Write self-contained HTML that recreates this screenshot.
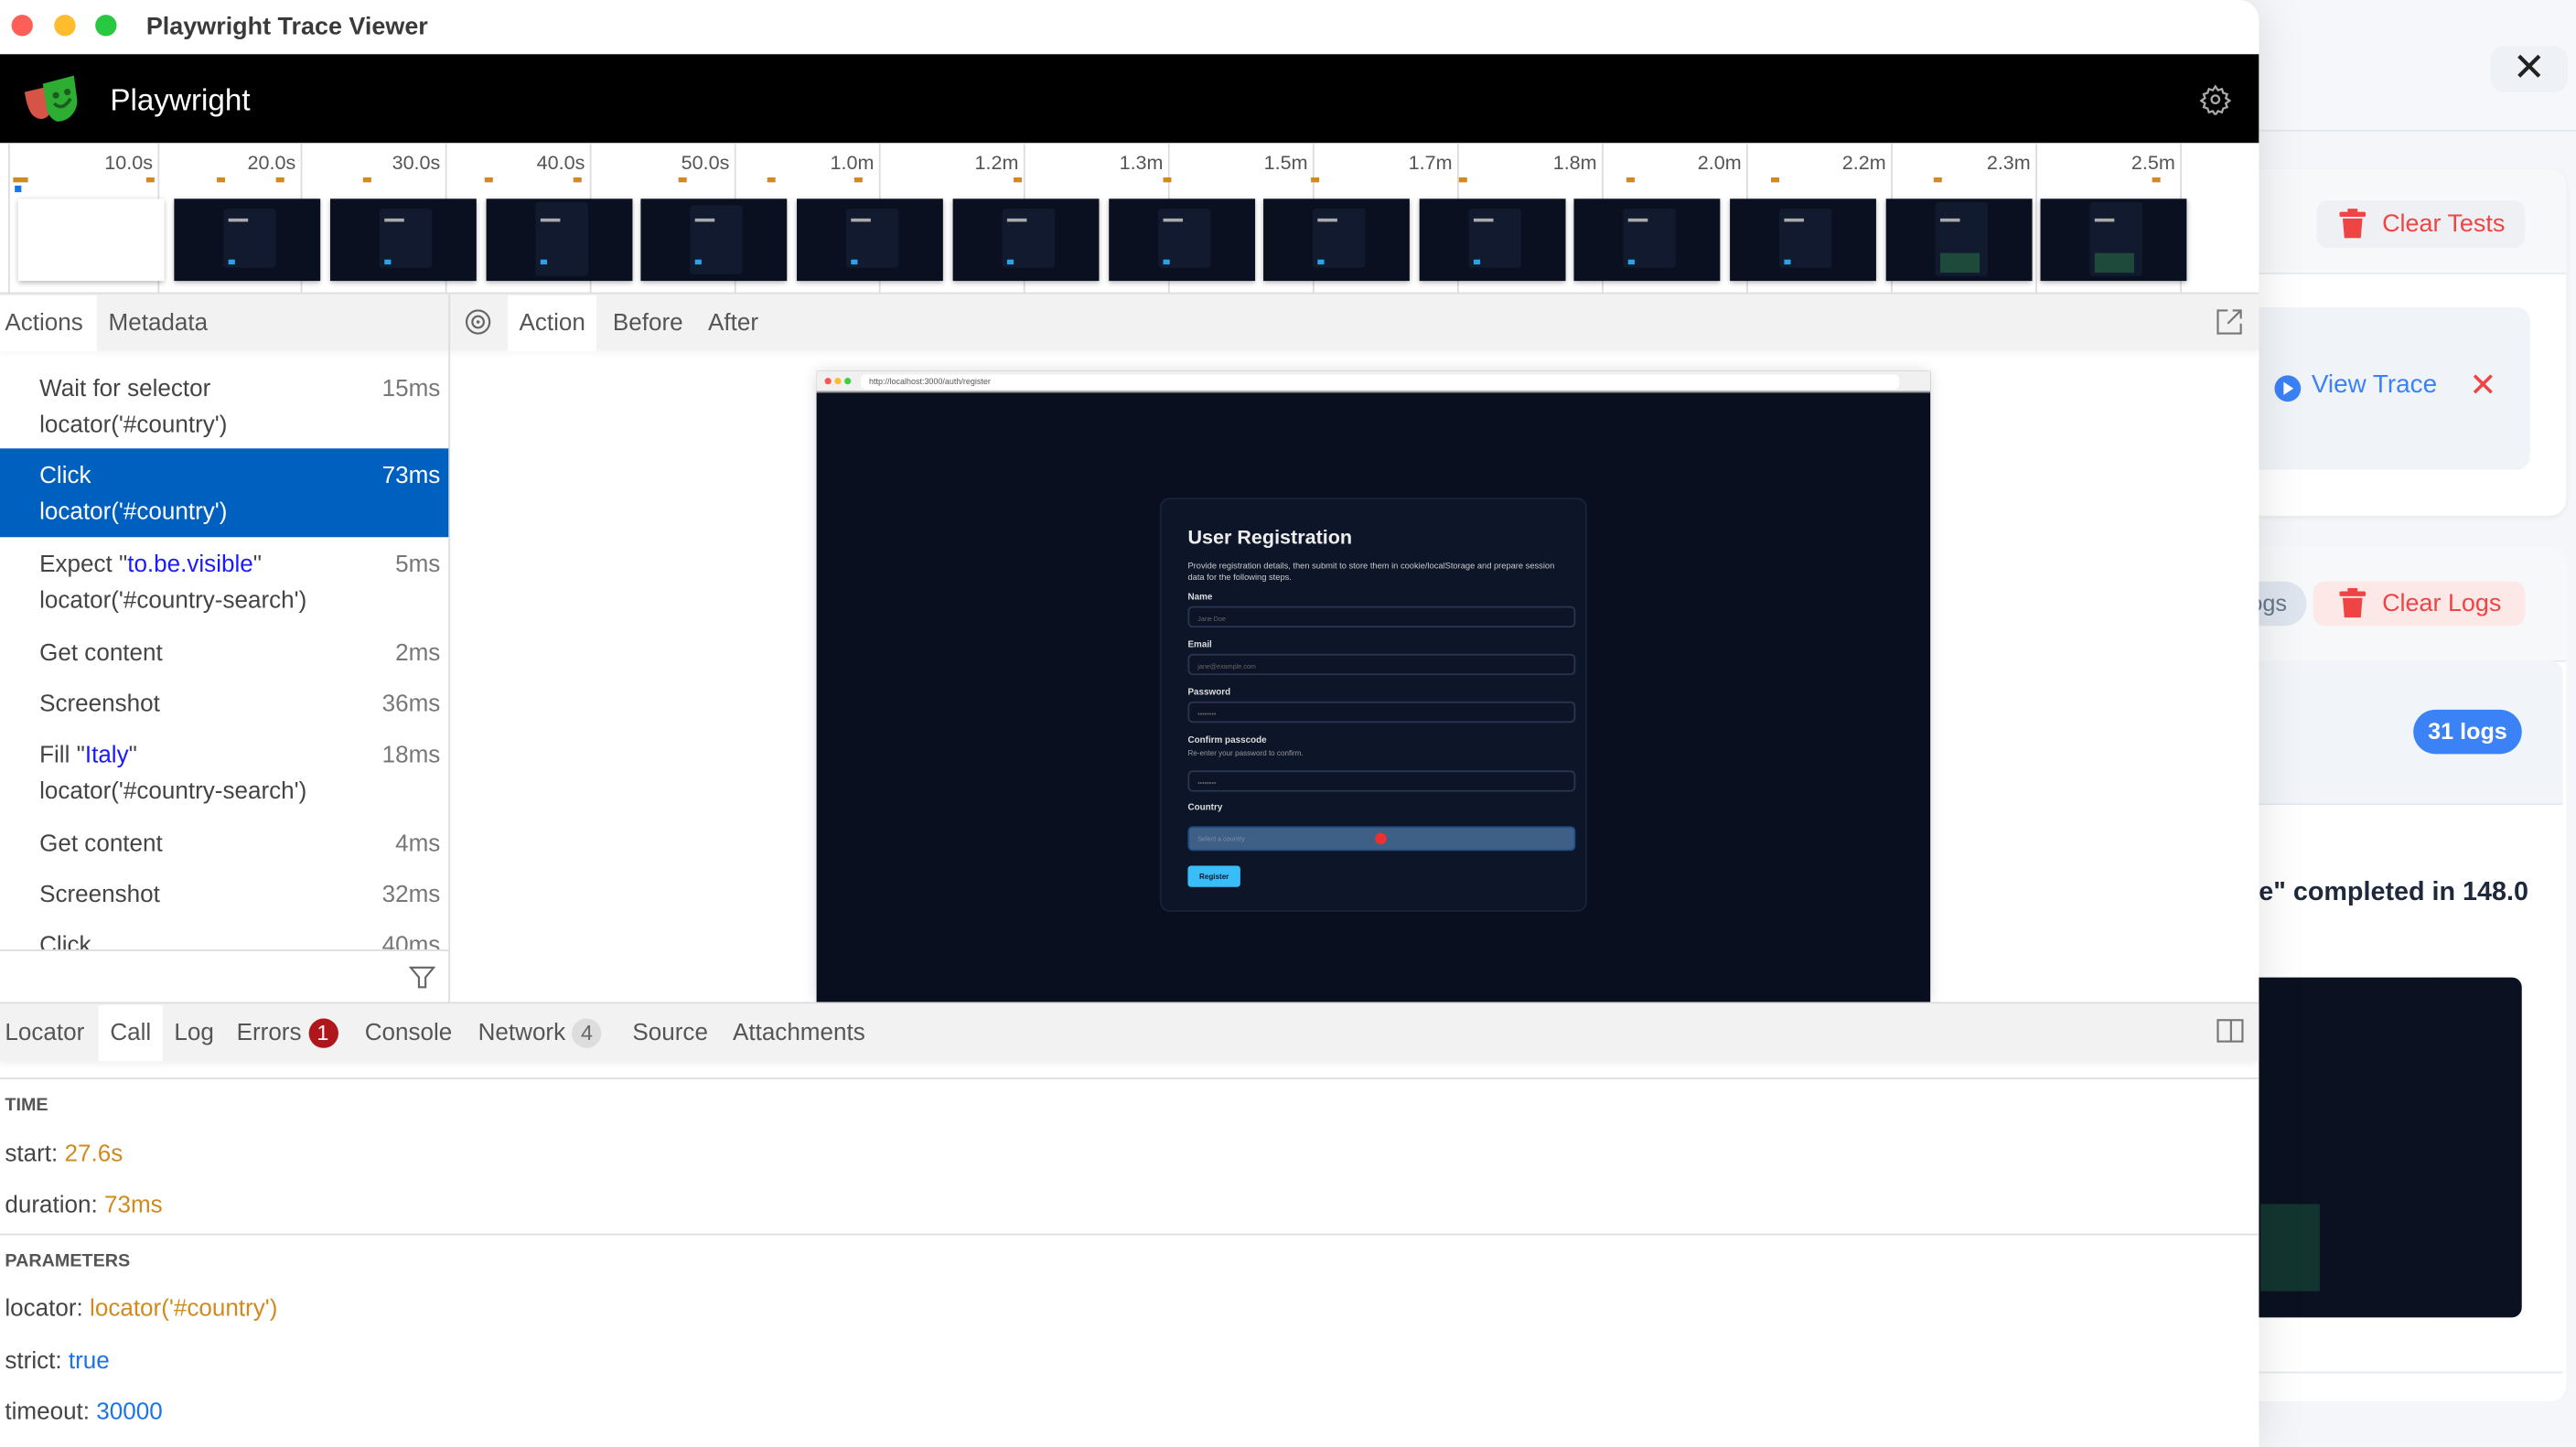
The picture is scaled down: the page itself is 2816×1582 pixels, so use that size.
<!DOCTYPE html>
<html><head><meta charset="utf-8"><style>
*{box-sizing:border-box;margin:0;padding:0}
html,body{width:2816px;height:1582px;overflow:hidden;background:#f4f6f9}
#s{position:absolute;left:0;top:0;width:1568px;height:881px;transform:scale(1.79592);transform-origin:0 0;font-family:"Liberation Sans",sans-serif;background:#f4f6f9}
.a{position:absolute}
.win{left:0;top:0;width:1375px;height:881px;background:#fff;border-top-right-radius:12px;box-shadow:0 0 30px rgba(0,0,0,.12);overflow:hidden}
.tl{width:13px;height:13px;border-radius:50%;top:9px}
.tick{top:87px;width:1px;height:91px;background:#ddd}
.lbl{top:92px;font-size:12px;color:#555;text-align:right;width:60px}
.om{top:108px;width:5px;height:3px;background:#d08a1e}
.th{top:121px;width:89px;height:50px;background:#0b1020;box-shadow:0 1px 3px rgba(0,0,0,.3)}
.th i{position:absolute;left:30px;top:6px;width:32px;height:36px;background:#111a2e;border-radius:2px}
.th b{position:absolute;left:33px;top:12px;width:12px;height:2px;background:#aaa}
.th u{position:absolute;left:33px;top:37px;width:4px;height:3px;background:#2aa4e8}
.tab{top:179px;height:34px;line-height:34px;font-size:14.5px;color:#555;padding:0 7px}
.row{left:0;width:273px;font-size:14.5px;color:#444;padding-left:24px}
.row .t{position:absolute;right:5px;color:#777}
.bl{color:#1a1aff}
.det{left:3px;font-size:14.5px;color:#444}
.or{color:#d08a1e}.blu{color:#1a73e8}
.fl{left:723px;width:236px;height:13px;border:1px solid #2a3550;border-radius:3px;background:#0d1427;font-size:4px;color:#666;padding:4px 5px}
.fk{left:723px;font-size:5.5px;font-weight:bold;color:#ddd}
</style></head><body><div id="s">
<div class="a" style="left:1300px;top:0;width:268px;height:80px;background:#f5f7fa;border-bottom:1px solid #e3e8ef"></div>
<div class="a" style="left:1516px;top:28px;width:47px;height:28px;background:#eef1f5;border-radius:8px;text-align:center;line-height:28px;font-size:24px;color:#222">✕</div>
<div class="a" style="left:1300px;top:103px;width:262px;height:211px;background:#fff;border-radius:10px;box-shadow:0 1px 3px rgba(0,0,0,.06)"></div>
<div class="a" style="left:1300px;top:103px;width:262px;height:64px;background:#f6f8fa;border-bottom:1px solid #e5e9ef;border-radius:10px 10px 0 0"></div>
<div class="a" style="left:1410px;top:122px;width:127px;height:29px;background:#eef0f3;border-radius:7px;color:#ef4444;font-size:15px;line-height:29px;padding-left:40px">Clear Tests</div>
<svg class="a" style="left:1424px;top:127px" width="16" height="18" viewBox="0 0 16 18"><rect x="0" y="2" width="16" height="3" rx="1" fill="#ef4444"/><rect x="5" y="0" width="6" height="3" fill="#ef4444"/><path d="M2 6h12l-1 12H3z" fill="#ef4444"/></svg>
<div class="a" style="left:1300px;top:187px;width:240px;height:99px;background:#f0f3f7;border-radius:8px"></div>
<svg class="a" style="left:1384px;top:228px" width="17" height="17"><circle cx="8.5" cy="8.5" r="8" fill="#3b82f6"/><path d="M6 4.5l6 4-6 4z" fill="#fff"/></svg>
<div class="a" style="left:1407px;top:226px;font-size:15.5px;color:#3b82f6">View Trace</div>
<div class="a" style="left:1503px;top:222px;font-size:20px;color:#ef4444">✕</div>
<div class="a" style="left:1300px;top:333px;width:262px;height:520px;background:#fff;border-radius:10px"></div>
<div class="a" style="left:1300px;top:333px;width:262px;height:70px;background:#f6f8fa;border-bottom:1px solid #e2e8f0;border-radius:10px 10px 0 0"></div>
<div class="a" style="left:1330px;top:354px;width:74px;height:27px;background:#dfe5ee;border-radius:14px;font-size:14px;color:#64748b;line-height:27px;text-align:right;padding-right:12px">logs</div>
<div class="a" style="left:1408px;top:354px;width:129px;height:27px;background:#fde8e8;border-radius:7px;color:#ef4444;font-size:15px;line-height:27px;padding-left:42px">Clear Logs</div>
<svg class="a" style="left:1424px;top:358px" width="16" height="18" viewBox="0 0 16 18"><rect x="0" y="2" width="16" height="3" rx="1" fill="#ef4444"/><rect x="5" y="0" width="6" height="3" fill="#ef4444"/><path d="M2 6h12l-1 12H3z" fill="#ef4444"/></svg>
<div class="a" style="left:1300px;top:402px;width:260px;height:88px;background:#f1f5f9;border-bottom:1px solid #e2e8f0;border-radius:8px 8px 0 0"></div>
<div class="a" style="left:1320px;top:424px;font-size:16px;font-weight:bold;color:#1e293b">Store</div>
<div class="a" style="left:1469px;top:432px;width:66px;height:27px;background:#3b82f6;border-radius:14px;color:#fff;font-weight:bold;font-size:14px;line-height:27px;text-align:center">31 logs</div>
<div class="a" style="left:1322px;top:535px;font-size:16px;font-weight:bold;color:#1e293b;white-space:nowrap">Store "e" completed in 148.0</div>
<div class="a" style="left:1300px;top:595px;width:235px;height:207px;background:#0b1120;border-radius:6px"></div>
<div class="a" style="left:1376px;top:733px;width:36px;height:53px;background:#133530"></div>
<div class="a" style="left:1300px;top:835px;width:260px;height:1px;background:#e5e9ef"></div>

<div class="a win">
 <div class="a tl" style="left:7px;background:#fe5f57"></div>
 <div class="a tl" style="left:33px;background:#febc2e"></div>
 <div class="a tl" style="left:58px;background:#28c840"></div>
 <div class="a" style="left:89px;top:8px;font-size:15px;font-weight:bold;color:#3a3a3a">Playwright Trace Viewer</div>
 <div class="a" style="left:0;top:33px;width:1375px;height:54px;background:#000"></div>
 <svg class="a" style="left:14px;top:46px" width="34" height="30" viewBox="0 0 34 30"><path d="M1 10l13-3 3 14c-1 5-6 7-10 4C4 23 2 17 1 10z" fill="#d65348"/><path d="M12 5l19-5 2 15c0 8-6 13-12 13-4-1-7-6-7-11z" fill="#2ead33"/><circle cx="20" cy="12" r="2" fill="#1c5c1f"/><circle cx="27" cy="10" r="2" fill="#1c5c1f"/><path d="M19 17q5 5 10-3" stroke="#1c5c1f" stroke-width="2" fill="none"/></svg>
 <div class="a" style="left:67px;top:50px;font-size:18.5px;color:#fff">Playwright</div>
 <svg class="a" style="left:1339px;top:51px" width="19" height="19" viewBox="0 0 24 24" fill="none" stroke="#aaa" stroke-width="1.6"><circle cx="12" cy="12" r="3"/><path d="M12 2l2 3 3-1 1 3 3 1-1 3 3 2-3 2 1 3-3 1-1 3-3-1-2 3-2-3-3 1-1-3-3-1 1-3-3-2 3-2-1-3 3-1 1-3 3 1z"/></svg>
 <div class="a tick" style="left:5px"></div>
 <div class="a" style="left:8px;top:108px;width:9px;height:3px;background:#d08a1e"></div>
 <div class="a" style="left:9px;top:113px;width:4px;height:4px;background:#1a73e8"></div>
 <div class="a tick" style="left:96px"></div><div class="a lbl" style="left:33px">10.0s</div><div class="a om" style="left:89px"></div>
 <div class="a tick" style="left:183px"></div><div class="a lbl" style="left:120px">20.0s</div><div class="a om" style="left:132px"></div>
 <div class="a tick" style="left:271px"></div><div class="a lbl" style="left:208px">30.0s</div><div class="a om" style="left:168px"></div>
 <div class="a tick" style="left:359px"></div><div class="a lbl" style="left:296px">40.0s</div><div class="a om" style="left:221px"></div>
 <div class="a tick" style="left:447px"></div><div class="a lbl" style="left:384px">50.0s</div><div class="a om" style="left:295px"></div>
 <div class="a tick" style="left:535px"></div><div class="a lbl" style="left:472px">1.0m</div><div class="a om" style="left:349px"></div>
 <div class="a tick" style="left:623px"></div><div class="a lbl" style="left:560px">1.2m</div><div class="a om" style="left:413px"></div>
 <div class="a tick" style="left:711px"></div><div class="a lbl" style="left:648px">1.3m</div><div class="a om" style="left:467px"></div>
 <div class="a tick" style="left:799px"></div><div class="a lbl" style="left:736px">1.5m</div><div class="a om" style="left:520px"></div>
 <div class="a tick" style="left:887px"></div><div class="a lbl" style="left:824px">1.7m</div><div class="a om" style="left:617px"></div>
 <div class="a tick" style="left:975px"></div><div class="a lbl" style="left:912px">1.8m</div><div class="a om" style="left:708px"></div>
 <div class="a tick" style="left:1063px"></div><div class="a lbl" style="left:1000px">2.0m</div><div class="a om" style="left:798px"></div>
 <div class="a tick" style="left:1151px"></div><div class="a lbl" style="left:1088px">2.2m</div><div class="a om" style="left:888px"></div>
 <div class="a tick" style="left:1239px"></div><div class="a lbl" style="left:1176px">2.3m</div><div class="a om" style="left:990px"></div>
 <div class="a tick" style="left:1327px"></div><div class="a lbl" style="left:1264px">2.5m</div><div class="a om" style="left:1078px"></div>
 <div class="a om" style="left:1177px"></div><div class="a om" style="left:1310px"></div>
 <div class="a" style="left:11px;top:121px;width:89px;height:50px;background:#fff;box-shadow:0 1px 3px rgba(0,0,0,.3)"></div>
 <div class="a th" style="left:106px"><i></i><b></b><u></u></div>
 <div class="a th" style="left:201px"><i></i><b></b><u></u></div>
 <div class="a th" style="left:296px"><i style="top:2px;height:45px"></i><b></b><u></u></div>
 <div class="a th" style="left:390px"><i style="top:4px;height:42px"></i><b></b><u></u></div>
 <div class="a th" style="left:485px"><i></i><b></b><u></u></div>
 <div class="a th" style="left:580px"><i></i><b></b><u></u></div>
 <div class="a th" style="left:675px"><i></i><b></b><u></u></div>
 <div class="a th" style="left:769px"><i></i><b></b><u></u></div>
 <div class="a th" style="left:864px"><i></i><b></b><u></u></div>
 <div class="a th" style="left:958px"><i></i><b></b><u></u></div>
 <div class="a th" style="left:1053px"><i></i><b></b><u></u></div>
 <div class="a th" style="left:1148px"><i style="top:2px;height:45px"></i><b></b><u style="width:24px;height:12px;top:33px;background:#1d4a3a"></u></div>
 <div class="a th" style="left:1242px"><i style="top:2px;height:45px"></i><b></b><u style="width:24px;height:12px;top:33px;background:#1d4a3a"></u></div>
 <div class="a" style="left:0;top:178px;width:1375px;height:35px;background:#f2f2f2;border-top:1px solid #ddd;box-shadow:0 2px 4px rgba(0,0,0,.05)"></div>
 <div class="a" style="left:273px;top:179px;width:1px;height:431px;background:#ddd"></div>
 <div class="a tab" style="left:0;padding:0 3px;background:#fff;width:59px;top:180px">Actions</div>
 <div class="a tab" style="left:59px;top:180px">Metadata</div>
 <svg class="a" style="left:283px;top:188px" width="16" height="16"><circle cx="8" cy="8" r="7" fill="none" stroke="#666" stroke-width="1.2"/><circle cx="8" cy="8" r="3.5" fill="none" stroke="#666" stroke-width="1.2"/><circle cx="8" cy="8" r="1" fill="#666"/></svg>
 <div class="a tab" style="left:309px;background:#fff;top:180px">Action</div>
 <div class="a tab" style="left:366px;top:180px">Before</div>
 <div class="a tab" style="left:424px;top:180px">After</div>
 <svg class="a" style="left:1349px;top:188px" width="16" height="16" fill="none" stroke="#777" stroke-width="1.2"><path d="M7 1H1v14h14V9M10 1h5v5M15 1L7 9"/></svg>
 <div class="a row" style="top:226px;line-height:22px">Wait for selector<span class="t">15ms</span><br>locator('#country')</div>
 <div class="a row" style="top:273px;height:54px;background:#0060c0;color:#fff;line-height:22px;padding-top:6px">Click<span class="t" style="color:#fff">73ms</span><br>locator('#country')</div>
 <div class="a row" style="top:333px;line-height:22px">Expect "<span class="bl">to.be.visible</span>"<span class="t">5ms</span><br>locator('#country-search')</div>
 <div class="a row" style="top:387px;line-height:22px">Get content<span class="t">2ms</span></div>
 <div class="a row" style="top:418px;line-height:22px">Screenshot<span class="t">36ms</span></div>
 <div class="a row" style="top:449px;line-height:22px">Fill "<span class="bl">Italy</span>"<span class="t">18ms</span><br>locator('#country-search')</div>
 <div class="a row" style="top:503px;line-height:22px">Get content<span class="t">4ms</span></div>
 <div class="a row" style="top:534px;line-height:22px">Screenshot<span class="t">32ms</span></div>
 <div class="a row" style="top:565px;line-height:22px;height:13px;overflow:hidden">Click<span class="t">40ms</span></div>
 <div class="a" style="left:0;top:578px;width:273px;height:1px;background:#ddd"></div>
 <svg class="a" style="left:249px;top:587px" width="16" height="16" fill="none" stroke="#666" stroke-width="1.2"><path d="M1 2h14l-5 6v6H6V8z"/></svg>
 <div class="a" style="left:497px;top:226px;width:678px;height:384px;background:#0a0f1f;box-shadow:0 0 8px rgba(0,0,0,.15)"></div>
 <div class="a" style="left:497px;top:226px;width:678px;height:13px;background:#f0f0f0;border-bottom:1px solid #999"></div>
 <div class="a" style="left:502px;top:230px;width:4px;height:4px;border-radius:50%;background:#f55"></div>
 <div class="a" style="left:508px;top:230px;width:4px;height:4px;border-radius:50%;background:#fb3"></div>
 <div class="a" style="left:514px;top:230px;width:4px;height:4px;border-radius:50%;background:#4c4"></div>
 <div class="a" style="left:524px;top:228px;width:632px;height:9px;background:#fff;border-radius:3px;font-size:5px;color:#555;padding:2px 5px">http://localhost:3000/auth/register</div>
 <div class="a" style="left:706px;top:303px;width:260px;height:252px;background:#0d1528;border:1px solid #17233d;border-radius:6px"></div>
 <div class="a" style="left:723px;top:320px;font-size:12px;font-weight:bold;color:#eee">User Registration</div>
 <div class="a" style="left:723px;top:342px;width:230px;font-size:5.2px;color:#ccc;line-height:7px">Provide registration details, then submit to store them in cookie/localStorage and prepare session data for the following steps.</div>
 <div class="a fk" style="top:361px">Name</div><div class="a fl" style="top:369px">Jane Doe</div>
 <div class="a fk" style="top:390px">Email</div><div class="a fl" style="top:398px">jane@example.com</div>
 <div class="a fk" style="top:419px">Password</div><div class="a fl" style="top:427px">••••••••</div>
 <div class="a fk" style="top:448px">Confirm passcode</div>
 <div class="a" style="left:723px;top:456px;font-size:4.5px;color:#999">Re-enter your password to confirm.</div>
 <div class="a fl" style="top:469px">••••••••</div>
 <div class="a fk" style="top:489px">Country</div>
 <div class="a fl" style="top:503px;height:15px;background:#3e5f86;border-color:#1e4d8c;color:#8090a8">Select a country</div>
 <div class="a" style="left:837px;top:507px;width:7px;height:7px;border-radius:50%;background:#f03030"></div>
 <div class="a" style="left:723px;top:527px;width:32px;height:13px;background:#38bdf8;border-radius:2px;font-size:4.5px;font-weight:bold;color:#0a1a2a;text-align:center;line-height:13px">Register</div>
 <div class="a" style="left:0;top:610px;width:1375px;height:36px;background:#f2f2f2;border-top:1px solid #ddd;box-shadow:0 2px 4px rgba(0,0,0,.05)"></div>
 <div class="a tab" style="left:0;top:612px;padding:0 3px">Locator</div>
 <div class="a tab" style="left:60px;top:612px;background:#fff">Call</div>
 <div class="a tab" style="left:99px;top:612px">Log</div>
 <div class="a tab" style="left:137px;top:612px">Errors <span style="display:inline-block;width:18px;height:18px;border-radius:50%;background:#b0171b;color:#fff;text-align:center;line-height:18px;font-size:13px">1</span></div>
 <div class="a tab" style="left:215px;top:612px">Console</div>
 <div class="a tab" style="left:284px;top:612px">Network <span style="display:inline-block;width:18px;height:18px;border-radius:50%;background:#ddd;color:#666;text-align:center;line-height:18px;font-size:13px">4</span></div>
 <div class="a tab" style="left:378px;top:612px">Source</div>
 <div class="a tab" style="left:439px;top:612px">Attachments</div>
 <svg class="a" style="left:1349px;top:620px" width="17" height="15" fill="none" stroke="#777" stroke-width="1.2"><rect x="1" y="1" width="15" height="13"/><path d="M9 1v13"/></svg>
 <div class="a" style="left:0;top:656px;width:1375px;height:1px;background:#ddd"></div>
 <div class="a det" style="top:667px;font-size:11px;font-weight:bold;color:#555">TIME</div>
 <div class="a det" style="top:695px">start: <span class="or">27.6s</span></div>
 <div class="a det" style="top:726px">duration: <span class="or">73ms</span></div>
 <div class="a" style="left:0;top:751px;width:1375px;height:1px;background:#ddd"></div>
 <div class="a det" style="top:762px;font-size:11px;font-weight:bold;color:#555">PARAMETERS</div>
 <div class="a det" style="top:789px">locator: <span class="or">locator('#country')</span></div>
 <div class="a det" style="top:821px">strict: <span class="blu">true</span></div>
 <div class="a det" style="top:852px">timeout: <span class="blu">30000</span></div>
</div>
</div></body></html>
